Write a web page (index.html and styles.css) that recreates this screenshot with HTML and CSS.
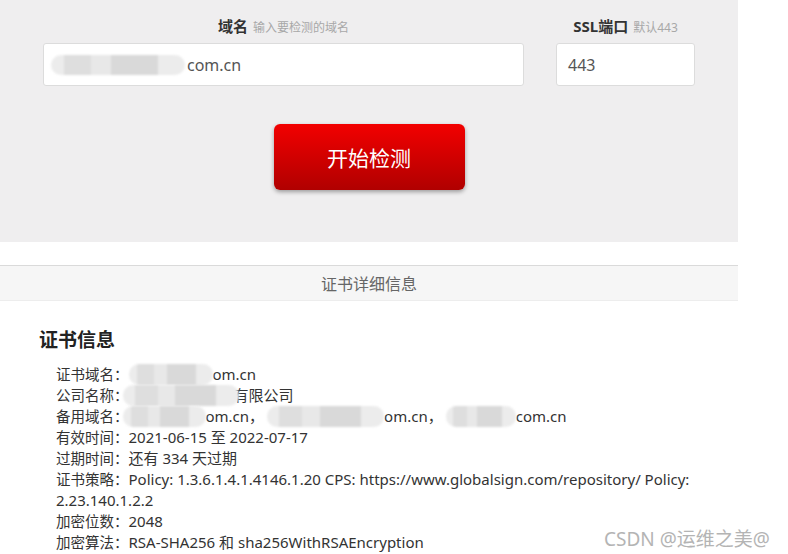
FILE: index.html
```html
<!DOCTYPE html>
<html lang="zh-CN">
  <head>
    <meta charset="UTF-8" />
    <meta name="viewport" content="width=device-width, initial-scale=1.0" />
    <title>SSL证书检测</title>
    <link rel="stylesheet" href="styles.css">
  </head>
  <body>
    <div class="check">
      <div class="fields">
        <div class="field domain">
          <label><b>域名</b><span>输入要检测的域名</span></label>
          <div class="input"><i class="blur b-input"></i>com.cn</div>
        </div>
        <div class="field port">
          <label><b>SSL端口</b><span>默认443</span></label>
          <div class="input">443</div>
        </div>
      </div>
      <a class="btn" href="javascript:;">开始检测</a>
    </div>

    <div class="bar">证书详细信息</div>

    <div class="cert">
      <h2>证书信息</h2>
      <ul class="info">
        <li><span class="k">证书域名：</span><i class="blur b1"></i>om.cn</li>
        <li><span class="k">公司名称：</span><i class="blur b2"></i>有限公司</li>
        <li><span class="k">备用域名：</span><i class="blur b3"></i>om.cn，<i class="blur b4"></i>om.cn，<i class="blur b5"></i>com.cn</li>
        <li><span class="k">有效时间：</span>2021-06-15 至 2022-07-17</li>
        <li><span class="k">过期时间：</span>还有 334 天过期</li>
        <li><span class="k">证书策略：</span>Policy: 1.3.6.1.4.1.4146.1.20 CPS: https://www.globalsign.com/repository/ Policy: 2.23.140.1.2.2</li>
        <li><span class="k">加密位数：</span>2048</li>
        <li><span class="k">加密算法：</span>RSA-SHA256 和 sha256WithRSAEncryption</li>
      </ul>
    </div>

    <div class="mark">CSDN @运维之美@</div>
  </body>
</html>
```

FILE: styles.css
```css
* {
  margin: 0;
  padding: 0;
  box-sizing: border-box;
}

body {
  font-family: "Noto Sans", "Noto Sans CJK SC", sans-serif;
  color: #333;
  background: #fff;
  width: 788px;
  height: 554px;
  overflow: hidden;
  position: relative;
}

ul {
  list-style: none;
}

.check {
  width: 738px;
  height: 242px;
  background: #efeeef;
  padding-top: 15px;
  display: flex;
  flex-direction: column;
  align-items: center;
}

.fields {
  align-self: stretch;
  display: flex;
  gap: 32px;
  padding-left: 43px;
}

.field {
  display: flex;
  flex-direction: column;
  align-items: center;
  gap: 6px;
}

.domain {
  width: 481px;
}

.port {
  width: 139px;
}

.field label {
  height: 22px;
  line-height: 22px;
  white-space: nowrap;
}

.field label b {
  font-size: 15px;
  color: #333;
}

.field label span {
  font-size: 12px;
  color: #a8a8a8;
  margin-left: 5px;
}

.input {
  align-self: stretch;
  height: 43px;
  background: #fff;
  border: 1px solid #dcdcdc;
  border-radius: 3px;
  padding-left: 7px;
  display: flex;
  align-items: center;
  font-size: 16px;
  color: #555;
}

.port .input {
  padding-left: 11px;
}

.btn {
  margin-top: 38px;
  width: 191px;
  height: 66px;
  border-radius: 6px;
  background: linear-gradient(#f20000, #b00000);
  box-shadow: 0 2px 4px rgba(0, 0, 0, 0.35);
  color: #fff;
  font-family: "Noto Sans CJK SC", sans-serif;
  font-size: 21px;
  text-decoration: none;
  display: flex;
  align-items: center;
  justify-content: center;
}

.bar {
  width: 738px;
  height: 36px;
  margin-top: 23px;
  background: #f6f6f6;
  border-top: 1px solid #dadada;
  border-bottom: 1px solid #ededed;
  font-family: "Noto Sans CJK SC", sans-serif;
  font-size: 16px;
  color: #666;
  display: flex;
  align-items: center;
  justify-content: center;
}

.cert {
  padding: 25px 0 0 39px;
  width: 720px;
}

.cert h2 {
  font-family: "Noto Sans CJK SC", sans-serif;
  font-size: 19px;
  color: #222;
  line-height: 26px;
}

.info {
  margin-top: 12px;
  padding-left: 17px;
  font-size: 15px;
  line-height: 21px;
  color: #333;
}

.info .k {
  font-size: 14.5px;
}

.blur {
  display: inline-block;
  height: 21px;
  vertical-align: top;
  border-radius: 10px;
  background: linear-gradient(90deg, #ececec 0 10%, #dedede 10% 30%, #e8e8e8 30% 45%, #d9d9d9 45% 80%, #ececec 80%);
  filter: blur(1px);
}

.b-input {
  width: 134px;
  height: 20px;
  margin-right: 2px;
}

.b1 {
  width: 84px;
}

.b2 {
  width: 116px;
  margin: 0 -5px 0 -6px;
}

.b3 {
  width: 83px;
  margin-left: -6px;
}

.b4 {
  width: 117px;
  margin-left: 3px;
}

.b5 {
  width: 70px;
  margin-left: 3px;
}

.mark {
  position: absolute;
  left: 604px;
  top: 524px;
  font-size: 19px;
  color: #b4b4b4;
  font-family: "Noto Sans", "Noto Sans CJK SC", sans-serif;
}
```
